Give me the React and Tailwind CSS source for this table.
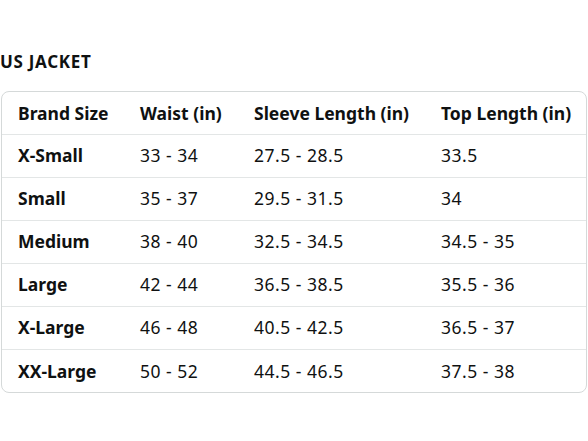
import React from "react";

const rows = [
  ["X-Small", "33 - 34", "27.5 - 28.5", "33.5"],
  ["Small", "35 - 37", "29.5 - 31.5", "34"],
  ["Medium", "38 - 40", "32.5 - 34.5", "34.5 - 35"],
  ["Large", "42 - 44", "36.5 - 38.5", "35.5 - 36"],
  ["X-Large", "46 - 48", "40.5 - 42.5", "36.5 - 37"],
  ["XX-Large", "50 - 52", "44.5 - 46.5", "37.5 - 38"],
];

export default function App() {
  return (
    <div
      className="w-[588px] h-[441px] bg-white text-[#0f1111] overflow-hidden"
      style={{ fontFamily: '"Noto Sans", Arial, sans-serif' }}
    >
      <div className="pt-[51px] text-[17px] font-bold leading-[22px] tracking-[0.7px]">US JACKET</div>
      <div className="mt-[18px] mx-[1px] border border-[#d5d9d9] rounded-[8px] overflow-hidden">
        <table className="w-full border-collapse table-fixed">
          <colgroup>
            <col className="w-[122px]" />
            <col className="w-[114px]" />
            <col className="w-[187px]" />
            <col />
          </colgroup>
          <thead>
            <tr className="h-[42px] border-b border-[#e3e6e6]">
              {["Brand Size", "Waist (in)", "Sleeve Length (in)", "Top Length (in)"].map((h) => (
                <th key={h} className="text-left font-bold text-[17.5px] pl-[16px] whitespace-nowrap">
                  {h}
                </th>
              ))}
            </tr>
          </thead>
          <tbody>
            {rows.map((r, i) => (
              <tr key={i} className={"h-[43px]" + (i < rows.length - 1 ? " border-b border-[#e3e6e6]" : "")}>
                {r.map((c, j) => (
                  <td
                    key={j}
                    className={
                      "text-left text-[17.5px] pl-[16px] whitespace-nowrap" +
                      (j === 0 ? " font-bold" : " tracking-[0.5px]")
                    }
                  >
                    {c}
                  </td>
                ))}
              </tr>
            ))}
          </tbody>
        </table>
      </div>
    </div>
  );
}
